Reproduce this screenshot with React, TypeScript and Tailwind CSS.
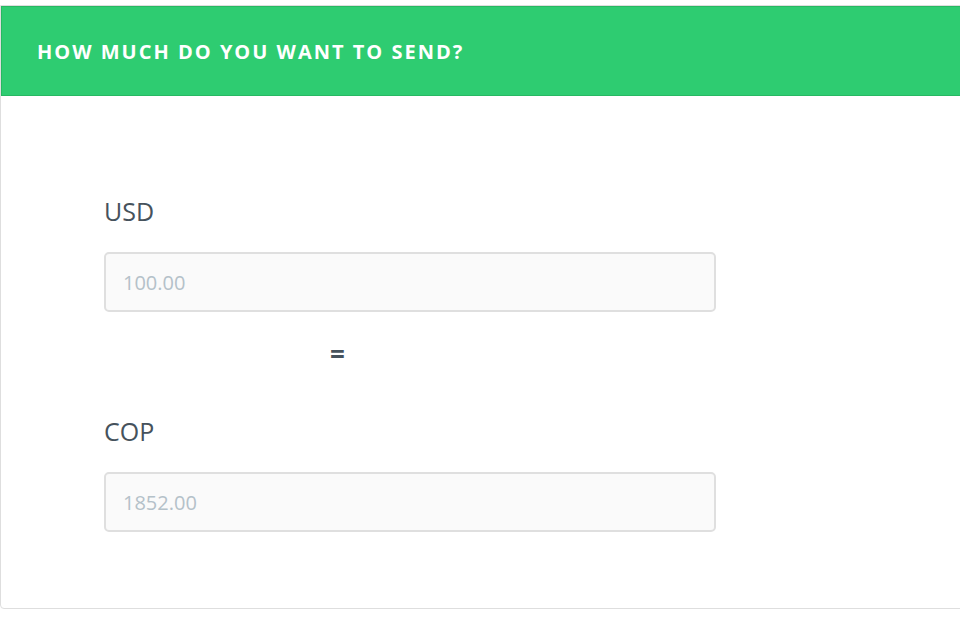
import React from 'react';

const FONT = { fontFamily: '"Open Sans", "Liberation Sans", sans-serif' };

function CurrencyField({ code, value }: { code: string; value: string }) {
  return (
    <div className="flex flex-col">
      <label className="text-[25px] leading-[30px] text-[#46525c]">{code}</label>
      <input
        type="text"
        readOnly
        placeholder={value}
        className="mt-[26px] h-[60px] w-[612px] rounded-[5px] border-2 border-[#dfdfdf] bg-[#fafafa] px-[17px] text-[20px] text-[#b4c1c9] outline-none placeholder:text-[#b4c1c9]"
      />
    </div>
  );
}

export default function App() {
  return (
    <div className="h-[640px] w-[960px] overflow-hidden bg-white pt-[5px]" style={FONT}>
      <div className="w-[1000px] rounded-bl-[4px] border border-[#dedede]">
        <div className="flex h-[90px] items-center border border-[#27b862] bg-[#2ecc71] pl-[35px] pt-[2px]">
          <h2 className="text-[20px] font-bold uppercase tracking-[2px] text-white">
            How much do you want to send?
          </h2>
        </div>
        <div className="flex h-[512px] flex-col pl-[103px] pt-[100px]">
          <CurrencyField code="USD" value="100.00" />
          <div className="mt-[30px] h-[24px] pl-[226px] text-[26px] font-bold leading-[24px] text-[#46525c]">=</div>
          <div className="mt-[50px]">
            <CurrencyField code="COP" value="1852.00" />
          </div>
        </div>
      </div>
    </div>
  );
}
